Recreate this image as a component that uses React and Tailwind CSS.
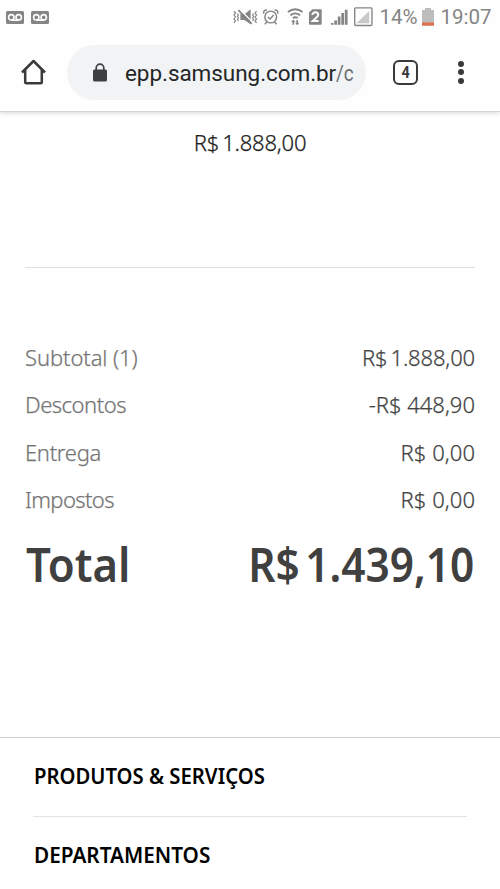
const rows = [
  { label: 'Subtotal (1)', tracking: 'tracking-[-0.1px]', priceTracking: 'tracking-[-0.15px]', price: <><span>R$</span><span className="ml-[3px]">1.888,00</span></> },
  { label: 'Descontos', tracking: 'tracking-[-0.5px]', priceTracking: 'tracking-normal', price: '-R$ 448,90' },
  { label: 'Entrega', tracking: 'tracking-[-0.3px]', priceTracking: 'tracking-[0.05px]', price: 'R$ 0,00' },
  { label: 'Impostos', tracking: 'tracking-[-0.6px]', priceTracking: 'tracking-[0.05px]', price: 'R$ 0,00' },
];

function Voicemail() {
  return (
    <svg width="18" height="13" viewBox="0 0 18 13">
      <rect width="18" height="13" rx="1.5" fill="#858585" />
      <g fill="none" stroke="#fff" strokeWidth="1.6">
        <circle cx="5.3" cy="6.3" r="2.7" />
        <circle cx="12.7" cy="6.3" r="2.7" />
        <path d="M5.3 9.2h7.4" />
      </g>
    </svg>
  );
}

function StatusIcons() {
  return (
    <svg width="150" height="24" viewBox="0 0 150 24" fill="none" stroke="#858585">
      <g strokeWidth="1.2">
        <path d="M1 6l1.500 2L1 10l1.500 2L1 14l1.500 2L1 18M4.500 8.500l1 1.500-1 1.500 1 1.500-1 1.500 1 1.500M24 6l-1.500 2 1.500 2-1.500 2 1.500 2-1.500 2 1.500 2M21 8.500L20 10l1 1.500-1 1.500 1 1.500-1 1.500" />
      </g>
      <path d="M7.500 9h4.500L18 4v15.500L11.500 15h-4z" fill="#858585" stroke="none" />
      <path d="M7 4L20 17.500" stroke="#fff" strokeWidth="1.400" />
      <path d="M5.500 5L19 19" strokeWidth="1.700" />
      <g strokeWidth="1.500">
        <circle cx="38.500" cy="12" r="6" />
        <path d="M35.500 12l2.300 2 3.700-4M31.500 8.500c-1-2 1-4.200 3.200-3.500M45.500 8.500c1-2-1-4.200-3.200-3.500M34.500 17l-2 2.300M42.500 17l2 2.300" />
      </g>
      <g transform="translate(1.500 0)">
        <g strokeWidth="1.900">
          <path d="M54.500 7c4.700-3.700 10.300-3.700 15 0M57 10.200c3.200-2.400 6.800-2.400 10 0M59.500 13c1.700-1.100 3.300-1.100 5 0" />
          <path d="M60 20v-4M64 15v4" strokeWidth="1.700" />
        </g>
        <path d="M57.800 17.200h4.400L60 14.500zM61.800 17.800h4.400L64 20.500z" fill="#858585" stroke="none" />
      </g>
      <g transform="translate(1.500 0)">
        <path d="M79.500 4H88q1 0 1 1v14q0 1-1 1H77q-1 0-1-1V7.500z" fill="#858585" stroke="none" />
        <path d="M79.500 10c0-3.800 6-3.500 6-.2 0 2.200-3.500 4-5.700 6.200h6" stroke="#fff" strokeWidth="2" />
      </g>
      <g fill="#858585" stroke="none">
        <path d="M100 18h2.500v2H100zM103.300 15.500h2.800V20h-2.800zM106.900 11.500h2.800V20h-2.800zM110.500 8h2.800v12h-2.800zM114.100 4.500h2.800V20h-2.800z" />
      </g>
      <rect x="124.200" y="2.700" width="17.600" height="18" rx="1" strokeWidth="1.400" />
      <path d="M139 6v12.500h-13z" fill="#c8c8c8" stroke="none" />
    </svg>
  );
}

export default function App() {
  return (
    <div className="flex h-[889px] w-[500px] flex-col overflow-hidden bg-white font-['Noto_Sans',sans-serif]">
      <header className="h-[112px] shrink-0 border-b border-[#d4d4d4] bg-[#fefefe] font-[Roboto,sans-serif] shadow-[0_1px_5px_rgba(0,0,0,0.16)]">
        <div className="flex h-[34px] items-center pl-[5.500px] text-[#858585]">
          <div className="flex gap-[7px]">
            <Voicemail />
            <Voicemail />
          </div>
          <div className="ml-[184px] flex w-[147px] shrink-0">
            <StatusIcons />
          </div>
          <span className="w-[42px] text-[20.500px] whitespace-nowrap">14%</span>
          <svg className="-mt-px shrink-0" width="12" height="18" viewBox="0 0 12 18">
            <path d="M3 0h6v2h3v16H0V2h3z" fill="#bdbdbd" />
            <path d="M0 14.500h12v3H0z" fill="#e46f4d" />
          </svg>
          <span className="ml-[7px] text-[20.500px] whitespace-nowrap">19:07</span>
        </div>
        <div className="flex h-[76px] items-center pl-5">
          <svg className="shrink-0" width="27" height="28" viewBox="0 0 27 28" fill="none" stroke="#383a3c" strokeWidth="2.500">
            <path d="M2 14.500L13.500 3 25 14.500M5.200 12v12.200q0 1 1 1h14.600q1 0 1-1V12" strokeLinejoin="round" />
          </svg>
          <div className="ml-5 flex h-[55px] w-[299px] shrink-0 items-center rounded-full bg-[#f1f3f4] pl-[26px]">
            <svg className="shrink-0" width="14" height="19" viewBox="0 0 14 19">
              <path d="M3.200 8V5a3.800 3.800 0 017.600 0v3" fill="none" stroke="#3c4043" strokeWidth="1.700" />
              <rect y="6.500" width="14" height="12" rx="1.500" fill="#3c4043" />
            </svg>
            <div className="mt-px ml-[18px] text-[22.500px] leading-8 tracking-[-0.060px] whitespace-nowrap text-[#242628]">
              epp.samsung.com.br<span className="inline-block origin-left scale-x-[0.840] text-[#6c6f72]">/c</span>
            </div>
          </div>
          <div className="ml-[27px] flex h-[25px] w-[25px] shrink-0 items-center justify-center rounded-[6px] border-[2.500px] border-[#383a3c] text-[16px] leading-none font-bold text-[#383a3c]">
            <span className="mt-px scale-x-90">4</span>
          </div>
          <div className="ml-[40px] flex flex-col gap-[2.500px]">
            <i className="size-[6px] rounded-full bg-[#383a3c]" />
            <i className="size-[6px] rounded-full bg-[#383a3c]" />
            <i className="size-[6px] rounded-full bg-[#383a3c]" />
          </div>
        </div>
      </header>
      <main className="flex h-[625px] shrink-0 flex-col px-[25px]">
        <div className="flex h-[155px] shrink-0 items-start justify-center pt-[14px] text-[22px] leading-8 font-light tracking-[-0.200px] text-[#222] [-webkit-text-stroke:0.25px]">
          <span>R$</span><span className="ml-[3px]">1.888,00</span>
        </div>
        <hr className="border-[#dedede]" />
        <div className="mt-[66px]">
          {rows.map((row) => (
            <div key={row.label} className="flex h-[47.300px] items-center justify-between text-[22px] font-light [-webkit-text-stroke:0.25px]">
              <span className={`text-[#757575] ${row.tracking}`}>{row.label}</span>
              <span className={`text-[#444] ${row.priceTracking}`}>{row.price}</span>
            </div>
          ))}
        </div>
        <div className="mt-[9px] flex h-[64px] items-center justify-between text-[46px] font-semibold text-[#404040]">
          <span className="ml-px origin-left scale-x-[0.950]">Total</span>
          <span className="mr-px flex origin-right scale-x-[0.922]"><span>R$</span><span className="ml-[6px]">1.439,10</span></span>
        </div>
      </main>
      <footer className="border-t border-[#cdcdcd] px-[33px] text-[22px] font-semibold text-black">
        <div className="flex h-[79px] items-center border-b border-[#e2e2e2] pb-[3px]">
          <span className="ml-px origin-left scale-x-[0.922]">PRODUTOS &amp; SERVIÇOS</span>
        </div>
        <div className="flex h-[76px] items-center pb-[2px]">
          <span className="ml-px origin-left scale-x-[0.942]">DEPARTAMENTOS</span>
        </div>
      </footer>
    </div>
  );
}
